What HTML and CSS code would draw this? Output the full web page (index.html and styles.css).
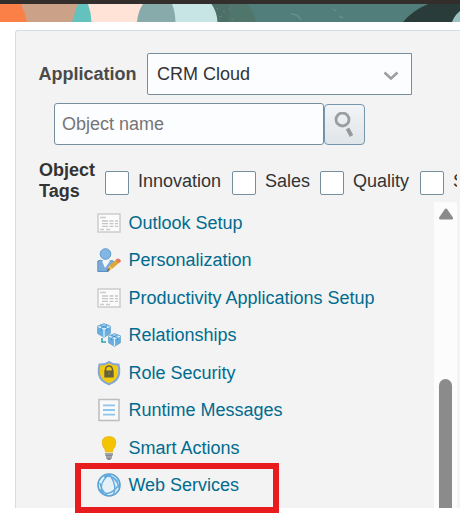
FILE: index.html
```html
<!DOCTYPE html>
<html lang="en">
<head>
<meta charset="utf-8">
<title>Application Objects</title>
<link rel="stylesheet" href="styles.css">
</head>
<body>
<svg width="0" height="0" class="defs">
  <symbol id="form" viewBox="0 0 24 24">
    <path d="M1 3h22v18H1z" fill="#fbfbfb" stroke="#cdcdcd" stroke-width="1.5"/>
    <path d="M3 6.5h6M3 18.5h4M9 18.5h4" stroke="#cbcbcb" stroke-width="1.3"/>
    <path d="M5 10h6M5 12.700h6M5 15.400h6M12.500 10h4M12.500 12.700h4M12.500 15.400h4M18 10h3M18 12.700h3M18 15.400h3" stroke="#c6c6c6" stroke-width="1.3"/>
  </symbol>
  <symbol id="cube" viewBox="0 0 14 15">
    <path d="M7 .7 13.300 3v7.500L7 14.300.7 10.500V3z" fill="#67b1e2" stroke="#5b98c5" stroke-width=".8"/>
    <path d="M1.500 3.200 7 1.200l5.500 2L7 5.500z" fill="#9bd0f2"/>
    <path d="M1 3.500 7 6l6-2.500M7 6v8" fill="none" stroke="#e4f3fc" stroke-width="1.200"/>
    <path d="M3.500 2.500 10 5v3M10 2.500 4 5v3" fill="none" stroke="#468fc4" stroke-width=".9"/>
  </symbol>
</svg>
<header class="banner">
  <svg width="460" height="18" viewBox="0 4 460 18">
    <path d="M0 4h460v18H0z" fill="#517e7b"/>
    <path d="M0 4h30v18H0z" fill="#fb8048"/>
    <path d="M21 4h60v18H27Q25 12 21 4z" fill="#cba187"/>
    <path d="M77.500 4H100v18H72Q75 13 77.500 4z" fill="#63c2bd"/>
    <path d="M88 4h60v18H91.500Q91 12 88 4z" fill="#ffe3d6"/>
    <path d="M143 4h35v18h-41Q138 11 143 4z" fill="#87abaa"/>
    <path d="M172 4h50v18h-46.500Q175 11 172 4z" fill="#c7e5e5"/>
    <path d="M211.500 4H230v18h-12.500Q217 12 211.500 4z" fill="#4c6f68"/>
    <path d="M229 4h18q7 8 9 18h-27z" fill="#50756b"/>
    <path d="M428 4h32v18h-57Q412 11 428 4z" fill="#293c39"/>
    <path d="M460 11q-6 5-8 11h8z" fill="#9bc2c1"/>
    <path d="M291 14q7 0 10 6M333 9l3 2M339 16l4 2" fill="none" stroke="#759b97" stroke-width="1.500" opacity=".6"/>
    <path d="M216 8l2 1M223 11l2 1M229 8l1 2M219 17l3-1M232 18l1 2" stroke="#658477"/>
  </svg>
</header>
<main class="panel">
  <div class="application">
    <label>Application</label>
    <div class="select">CRM Cloud
      <svg width="16" height="10" viewBox="0 0 16 10"><path d="m1.500 1.500 6.500 6 6.500-6" fill="none" stroke="#9b9d9e" stroke-width="2.500"/></svg>
    </div>
  </div>
  <div class="search">
    <input type="text" placeholder="Object name">
    <button aria-label="Search">
      <svg width="20" height="26" viewBox="0 0 20 26"><circle cx="8.500" cy="7.500" r="6.500" fill="none" stroke="#9b9d9e" stroke-width="2.800"/><path d="m13.500 16.500 4 7.500" stroke="#96999a" stroke-width="3.800"/></svg>
    </button>
  </div>
  <div class="tags">
    <b>Object Tags</b>
    <div class="options">
      <i class="check"></i><span class="innovation">Innovation</span>
      <i class="check"></i><span class="sales">Sales</span>
      <i class="check"></i><span class="quality">Quality</span>
      <i class="check"></i><span>Service</span>
    </div>
  </div>
  <div class="scroller">
    <ul class="objects">
      <li><svg><use href="#form"/></svg><a>Outlook Setup</a></li>
      <li><svg viewBox="0 0 24 24">
        <path d="M.8 13q3-1.500 5 0l3 2 4-2q3.500-1 4.500 1l-6 9.500H.8z" fill="#7babd9" stroke="#5a8fc5"/>
        <path d="m5 13 3 7 5-7z" fill="#f5f8fa"/>
        <circle cx="8.500" cy="6" r="5.300" fill="#84b6e3" stroke="#609bcc"/>
        <path d="m10 23 2-5 8-7 3 3-8 7z" fill="#dda73a"/><path d="m12 18 3 3" stroke="#f8d68b"/><path d="m10 23 1-2.500 1.500 1.500z" fill="#68503b"/>
        <path d="m18.500 12 2-1.500q3 0 3.500 3l-2 1.500z" fill="#ed775d"/>
      </svg><a>Personalization</a></li>
      <li><svg><use href="#form"/></svg><a>Productivity Applications Setup</a></li>
      <li><svg viewBox="0 0 24 24"><use href="#cube" width="14" height="15"/><use href="#cube" x="10.500" y="10" width="14" height="14"/><path d="M5 15v4h4" fill="none" stroke="#29aaa8" stroke-width="1.600"/></svg><a>Relationships</a></li>
      <li><svg viewBox="0 0 24 24">
        <path d="M12 1Q8 4 2.500 3.500 0 14 5 19q3 3 7 4.300Q16 22 19 19q5-5 2.500-15.500Q16 4 12 1z" fill="#f3ca13" stroke="#82a5d6" stroke-width="2"/>
        <path d="M8.500 10V8.500a3.500 3.500 0 0 1 7 0V10" fill="none" stroke="#65603e" stroke-width="1.600"/><path d="M7.300 9.500h9.400v7H7.300z" fill="#65603e"/><path d="M12 11v3" stroke="#8d8242"/>
      </svg><a>Role Security</a></li>
      <li><svg viewBox="0 0 24 24">
        <path d="M2 1.500h20v21H2z" fill="#f8f9f9" stroke="#bdbdbd" stroke-width="1.500"/>
        <path d="M6 7.300h12M6 12h12M6 16.700h12" stroke="#8fc6ed" stroke-width="1.800"/>
      </svg><a>Runtime Messages</a></li>
      <li><svg viewBox="0 0 24 24">
        <path d="M8.500 16q0-3-2.300-5Q2.500 1 12 .5 21.500 1 17.800 11q-2.300 2-2.300 5z" fill="#f5c400" stroke="#e5b414" stroke-width=".7"/>
        <path d="M8 17h8v2l-1 1v2l-2 2h-2l-2-2v-2l-1-1z" fill="#85898e"/><path d="M8 18h8M9 21h6" stroke="#b7bdc2"/>
      </svg><a>Smart Actions</a></li>
      <li><svg viewBox="0 0 24 24">
        <circle cx="12" cy="12" r="11" fill="#e5f0f7" stroke="#5ca2d0" stroke-width="1.600"/>
        <path d="M5 20Q2 8 13 1.500M8 2Q20 3 22 15M2 16q9 10 19-3M3 10q1 7 7 12M7 4q8-3 14 5M16 22q5-8-3-20" fill="none" stroke="#63ace0" stroke-width="1.400"/>
      </svg><a>Web Services</a></li>
    </ul>
    <div class="scrollbar">
      <svg width="14" height="12" viewBox="0 0 14 12"><path d="M7 2 12.500 10h-11z" fill="#8b8b8b" stroke="#8b8b8b" stroke-width="3" stroke-linejoin="round"/></svg>
      <div class="thumb"></div>
    </div>
  </div>
</main>
<div class="highlight"></div>
</body>
</html>
```

FILE: styles.css
```css
* { box-sizing: border-box; }
body {
  margin: 0;
  width: 460px;
  height: 514px;
  overflow: hidden;
  background: #fff;
  color: #333;
  font: 18px/21px "Liberation Sans", Arial, sans-serif;
}
.defs { position: absolute; }
.banner { height: 22px; border-top: 4px solid #332e2b; }
.banner svg { display: block; }
.panel {
  margin: 8px 0 0 15px;
  height: 478px;
  overflow: hidden;
  background: #f3f3f3;
  border: 1px solid #d3dde6;
  border-width: 1px 0 0 1px;
  border-top-left-radius: 3px;
}
.application { display: flex; align-items: center; margin: 22px 0 0 22.5px; }
.application label { width: 108.5px; font-weight: bold; color: #4a4a4a; }
.select {
  display: flex;
  align-items: center;
  justify-content: space-between;
  width: 265px;
  height: 42px;
  padding: 0 12px 0 9px;
  border: 1px solid #758f9e;
  border-radius: 2px 0 0 2px;
  background: #fcfdff;
}
.select svg { margin-top: 3px; }
.search { display: flex; align-items: flex-end; margin: 8px 0 0 38px; }
.search input {
  width: 270px;
  height: 42px;
  padding: 0 7px;
  border: 1px solid #758f9e;
  border-radius: 3px;
  background: #fcfdff;
  font: inherit;
}
.search input::placeholder { color: #757575; opacity: 1; }
.search button {
  width: 41px;
  height: 41px;
  padding: 7px 0 0 9px;
  border: 1px solid #7696ae;
  border-radius: 4px;
  background: linear-gradient(#f2f4f6, #e0e5e9);
  display: flex;
}
.tags { display: flex; width: 441px; height: 42px; margin-top: 15px; padding-left: 23px; overflow: hidden; }
.tags b { width: 66px; flex: none; }
.options { display: flex; align-items: flex-start; padding-top: 11px; }
.options span { flex: none; }
.check {
  flex: none;
  width: 24px;
  height: 24px;
  margin-right: 9px;
  border: 1px solid #758f9e;
  border-radius: 2px;
  background: #fff;
}
.innovation { width: 94px; }
.sales { width: 55px; }
.quality { width: 67px; }
.scroller { display: flex; height: 306px; }
.objects { list-style: none; width: 418px; margin: 0; padding: 2px 0 0 81px; }
.objects li { display: flex; align-items: center; height: 37.5px; }
.objects svg { width: 24px; height: 24px; margin-right: 7.4px; overflow: visible; }
.objects a { padding-top: 1px; color: #006b8f; }
.scrollbar { width: 23px; padding: 6px 4px 0 5px; background: #fcfcfc; }
.scrollbar svg { display: block; }
.thumb { width: 13px; height: 140px; margin-top: 159px; border-radius: 7px 7px 0 0; background: #8b8b8b; }
.highlight { position: absolute; left: 75px; top: 463px; width: 204px; height: 50px; border: 6px solid #e81b1e; }
```
